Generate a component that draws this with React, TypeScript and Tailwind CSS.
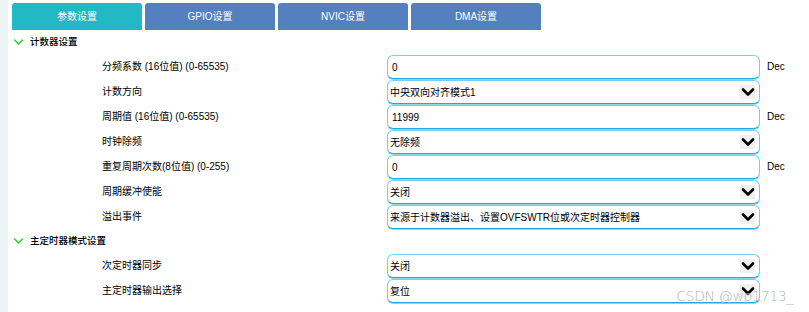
import React from 'react';

type Row = { label: string; value: string; kind: 'input' | 'select' };

const sections: { title: string; rows: Row[] }[] = [
  {
    title: '计数器设置',
    rows: [
      { label: '分频系数 (16位值) (0-65535)', value: '0', kind: 'input' },
      { label: '计数方向', value: '中央双向对齐模式1', kind: 'select' },
      { label: '周期值 (16位值) (0-65535)', value: '11999', kind: 'input' },
      { label: '时钟除频', value: '无除频', kind: 'select' },
      { label: '重复周期次数(8位值) (0-255)', value: '0', kind: 'input' },
      { label: '周期缓冲使能', value: '关闭', kind: 'select' },
      { label: '溢出事件', value: '来源于计数器溢出、设置OVFSWTR位或次定时器控制器', kind: 'select' },
    ],
  },
  {
    title: '主定时器模式设置',
    rows: [
      { label: '次定时器同步', value: '关闭', kind: 'select' },
      { label: '主定时器输出选择', value: '复位', kind: 'select' },
    ],
  },
];

const tabs = ['参数设置', 'GPIO设置', 'NVIC设置', 'DMA设置'];

const Chevron: React.FC<{ className?: string; strokeWidth?: number }> = ({ className, strokeWidth = 2.6 }) => (
  <svg viewBox="0 0 14 10" className={className} fill="none">
    <path d="M2 2.5 L7 7.5 L12 2.5" stroke="currentColor" strokeWidth={strokeWidth} strokeLinecap="round" strokeLinejoin="round" />
  </svg>
);

const Field: React.FC<{ row: Row }> = ({ row }) => (
  <div className="flex h-[25px] items-end">
    <div className="w-[379px] self-center pl-[94px] text-[10px] text-black">{row.label}</div>
    <div className="flex h-[24px] w-[373px] items-center rounded-[6px] border border-[#79cdef] border-b-[#22a8e0] bg-white shadow-[0_1px_0_#8fd6f2]">
      <span className={`flex-1 text-[10px] text-black ${row.kind === 'input' ? 'pl-[4px]' : 'pl-[2px]'}`}>
        {row.value}
      </span>
      {row.kind === 'select' && (
        <span className="mr-[4px] flex h-[14px] w-[15px] items-center justify-center bg-[#f0f0f0] text-black">
          <Chevron className="h-[10px] w-[14px]" />
        </span>
      )}
    </div>
    {row.kind === 'input' && (
      <span className="ml-[7px] self-center text-[10px] text-black">Dec</span>
    )}
  </div>
);

export default function App() {
  return (
    <div className="relative flex h-[312px] w-[809px] overflow-hidden bg-white font-['Liberation_Sans','Noto_Sans_CJK_SC',sans-serif]">
      <div className="w-[8px] shrink-0 bg-[#edf4f6]" />
      <div className="flex-1">
        <div className="ml-[4px] flex gap-[3px] pt-[3px]">
          {tabs.map((t, i) => (
            <div
              key={t}
              className={`flex h-[27px] w-[130px] items-center justify-center rounded-t-[3px] text-[10px] text-white ${
                i === 0 ? 'bg-[#22b8c6]' : 'bg-[#5580bf]'
              }`}
            >
              {t}
            </div>
          ))}
        </div>

        {sections.map((s) => (
          <div key={s.title}>
            <div className="flex h-[24px] items-center pl-[5px]">
              <Chevron className="h-[8px] w-[11px] text-[#22dd22]" strokeWidth={2} />
              <span className="ml-[6px] text-[9.5px] font-medium text-black">{s.title}</span>
            </div>
            {s.rows.map((r) => (
              <Field key={r.label} row={r} />
            ))}
          </div>
        ))}
      </div>

      <div className="pointer-events-none absolute right-[16px] bottom-[5px] text-[14px] font-light text-[#b4b4b4] font-['DejaVu_Sans',sans-serif] tracking-tight">
        CSDN @wp1713_
      </div>
    </div>
  );
}
